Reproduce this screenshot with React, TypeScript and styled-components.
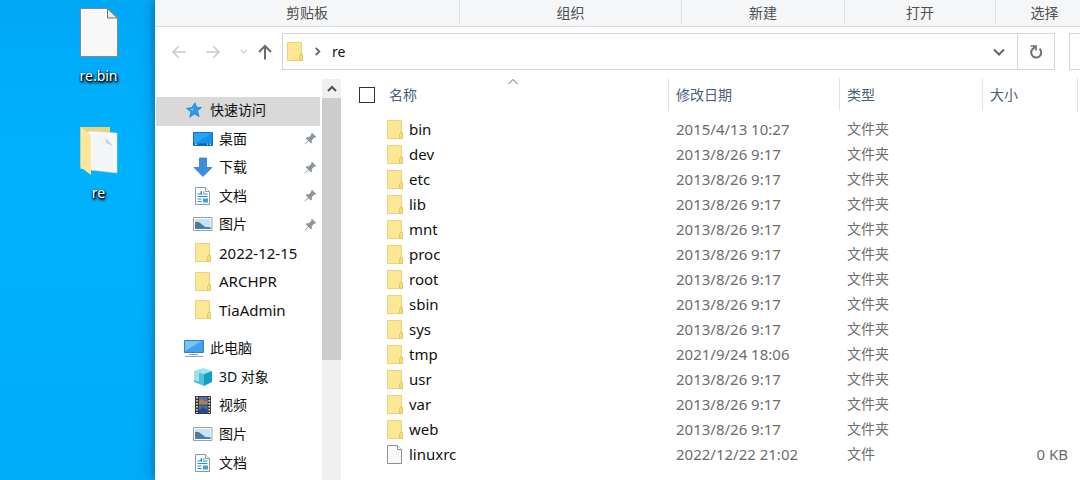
import React from 'react';
import styled, { createGlobalStyle } from 'styled-components';

const GlobalStyle = createGlobalStyle`
  *, *::before, *::after { box-sizing: border-box; }
  body {
    margin: 0;
    background: #00acf8;
    font-family: "Noto Sans", "Noto Sans CJK SC", sans-serif;
    font-size: 15px;
    color: #111;
  }
  :lang(zh) { font-size: 14px; }
  button { font: inherit; color: inherit; border: 0; padding: 0; background: none; }
  ul { list-style: none; margin: 0; padding: 0; }
  svg { display: block; flex: none; }
`;

const Screen = styled.div`
  display: flex;
  min-height: 100vh;
  overflow: hidden;
  background: linear-gradient(180deg, #00a8f6 0%, #00b2fe 35%, #00b0fc 60%, #00abf8 100%);
`;

const Desktop = styled.section`
  flex: none;
  width: 155px;
  padding: 7px 20px 0 62px;
  display: flex;
  flex-direction: column;
  gap: 38px;
`;

const DesktopItem = styled.button`
  display: flex;
  flex-direction: column;
  align-items: center;
  gap: 8px;
  width: 73px;
  font-size: 14px;
  line-height: 20px;
  color: #fff;
  text-shadow: 0 1px 2px #000, 1px 1px 2px #000, 1px 2px 3px #000;
`;

const Window = styled.main`
  flex: 1;
  min-width: 0;
  display: flex;
  flex-direction: column;
  background: #fff;
  box-shadow: 0 0 12px rgba(0, 50, 100, 0.6);
`;

const Ribbon = styled.div`
  display: grid;
  grid-template-columns:
    minmax(0, 305fr) minmax(0, 222fr) minmax(0, 163fr)
    minmax(0, 151fr) minmax(0, 84fr);
  height: 27px;
  overflow: hidden;
  background: #f5f6f7;
  border-bottom: 1px solid #dadbdc;
`;

const RibbonGroup = styled.div`
  min-width: 98px;
  height: 24px;
  line-height: 25px;
  font-size: 14px;
  text-align: center;
  color: #505050;
  border-right: 1px solid #dfe0e1;
`;

const NavBar = styled.div`
  display: flex;
  align-items: center;
  height: 50px;
  padding: 6px 0 7px 15px;
  overflow: hidden;
`;

const NavButton = styled.button<{ $width: number }>`
  flex: none;
  display: flex;
  align-items: center;
  justify-content: center;
  width: ${(p) => p.$width}px;
  height: 36px;
`;

const AddressBox = styled.div`
  flex: 1;
  display: flex;
  align-items: center;
  height: 37px;
  border: 1px solid #d5d5d5;
`;

const Crumbs = styled.div`
  flex: 1;
  display: flex;
  align-items: center;
  gap: 9px;
  padding-left: 4px;
  font-size: 14px;
`;

const Refresh = styled.button`
  display: flex;
  align-items: center;
  justify-content: center;
  align-self: stretch;
  width: 37px;
  border-left: 1px solid #d5d5d5;
`;

const Search = styled.input`
  width: 11px;
  height: 37px;
  margin-left: 14px;
  padding: 0;
  border: 1px solid #d5d5d5;
  border-right: 0;
  border-radius: 0;
  outline: 0;
`;

const Body = styled.div`
  flex: 1;
  display: flex;
  min-height: 0;
`;

const Sidebar = styled.nav`
  flex: none;
  width: 167px;
  padding: 20px 2px 0 1px;
  display: flex;
  flex-direction: column;
  gap: 10px;
`;

const Tree = styled.ul<{ $height: number }>`
  display: grid;
  grid-auto-rows: 1fr;
  height: ${(p) => p.$height}px;
`;

const TreeRow = styled.li<{ $root?: boolean; $selected?: boolean }>`
  display: flex;
  align-items: center;
  padding: 0 3px 2px ${(p) => (p.$root ? 28 : 37)}px;
  background: ${(p) => (p.$selected ? '#d9d9d9' : 'transparent')};
`;

const TreeIcon = styled.span`
  display: flex;
  justify-content: center;
  width: 20px;
  margin-right: 6px;
`;

const TreeLabel = styled.a`
  flex: 1;
  line-height: 20px;
  white-space: nowrap;
  color: inherit;
  text-decoration: none;
`;

const Scrollbar = styled.div`
  flex: none;
  width: 19px;
  margin-top: 2px;
  background: #f0f0f0;
`;

const ScrollButton = styled.button`
  display: flex;
  align-items: center;
  justify-content: center;
  width: 100%;
  height: 19px;
`;

const ScrollThumb = styled.div`
  height: 262px;
  background: #cdcdcd;
`;

const FileArea = styled.div`
  flex: 1;
  min-width: 0;
`;

const FileTable = styled.table`
  width: 100%;
  table-layout: fixed;
  border-collapse: collapse;
`;

const Col = styled.col<{ $width?: number }>`
  width: ${(p) => (p.$width ? `${p.$width}px` : 'auto')};
`;

const HeadCell = styled.th`
  position: relative;
  height: 40px;
  padding: 0 0 6px 7px;
  text-align: left;
  vertical-align: middle;
  font-weight: 400;
  font-size: 14px;
  color: #4c607a;
`;

const HeadInner = styled.div<{ $line?: boolean }>`
  height: 33px;
  line-height: 33px;
  margin-left: -7px;
  padding-left: 7px;
  border-left: 1px solid ${(p) => (p.$line ? '#e2e2e2' : 'transparent')};
`;

const SortMark = styled.span`
  position: absolute;
  top: -1px;
  left: 44%;
`;

const Check = styled.input`
  appearance: none;
  display: block;
  width: 16px;
  height: 16px;
  margin: 1px 0 0 11px;
  border: 1px solid #333;
  background: #fff;
`;

const Cell = styled.td<{ $right?: boolean }>`
  height: 25px;
  padding: 0 ${(p) => (p.$right ? 9 : 0)}px 1px 8px;
  line-height: 22px;
  white-space: nowrap;
  text-align: ${(p) => (p.$right ? 'right' : 'left')};
  color: #6d6d6d;
`;

const FileName = styled.div`
  display: flex;
  align-items: center;
  gap: 6px;
  margin-left: -2px;
  color: #111;
`;

const Folder = () => (
  <svg width="16" height="19" viewBox="0 0 16 19">
    <path d="M.5.5h14v11l1 1.500v5.500H.5z" fill="#fce792" stroke="#ecd27c" />
    <path d="M12.500 18.500v-4l1.500-3 1.500 2v5z" fill="#f8dc76" stroke="#e5c766" />
  </svg>
);

const Sheet = () => (
  <svg width="16" height="19" viewBox="0 0 16 19">
    <path d="M.5.5h10l4 4v14H.5z" fill="#f9f9f9" stroke="#8f8f8f" />
    <path d="M10.500.5v4h4" fill="#fff" stroke="#8f8f8f" />
  </svg>
);

const BigSheet = () => (
  <svg width="38" height="51" viewBox="0 0 38 51">
    <path d="M.5 1.500h27.500l9.500 10v38H.5z" fill="#f8f8f8" stroke="#8d8580" />
    <path d="M27.500 1.500v9.500h10z" fill="#e9e9e9" stroke="#77706c" />
  </svg>
);

const BigFolder = () => (
  <svg width="38" height="51" viewBox="0 0 38 51">
    <path d="M.5 3h29.500v8H10v34H.5z" fill="#eed27c" />
    <path d="M8 7l29 2v40l-26-3z" fill="#fbfbfb" stroke="#d9dde0" strokeWidth=".6" />
    <path d="M12 10l15 1 6 7v28l-21-2z" fill="#f3f5f7" />
    <path d="M26 14l7 8-7-3z" fill="#c9d3dc" />
    <path d="M.5 3L11 11v40L.5 43z" fill="#fde59c" />
  </svg>
);

const Star = () => (
  <svg width="16" height="16" viewBox="0 0 16 16">
    <path d="M9 .8l1.500 4.500 5 .2-4 3.300 1.600 5.700-4.700-2.500-4.700 3.200 1.300-5.400L.6 6.500l5.200-.9z" fill="#2f9be6" stroke="#1b83d2" strokeWidth=".8" />
    <path d="M8.800 3l-.9 3.300-4.300.8 3.200 1.800z" fill="#6bc3fa" />
  </svg>
);

const DesktopIcon = () => (
  <svg width="20" height="16" viewBox="0 0 20 16">
    <path d="M.5 1.500h19v13H.5z" fill="#1590ee" stroke="#0e70c4" />
    <path d="M1 2h18L3 12H1z" fill="#2ba1f7" />
    <path d="M1 12.500h18v1.500H1z" fill="#0b62b0" />
    <path d="M2 13.200h2M14 13.200h1M16.500 13.200h1.500" stroke="#fff" />
  </svg>
);

const Download = () => (
  <svg width="20" height="20" viewBox="0 0 20 20">
    <path d="M6.500 1h7v9.500h5.500L10 19.500 1 10.500h5.500z" fill="#3b8ede" stroke="#2f7dcb" strokeWidth=".8" />
  </svg>
);

const DocumentIcon = () => (
  <svg width="16" height="20" viewBox="0 0 16 20">
    <path d="M.5 1.500h10l4 4v13H.5z" fill="#fbfdff" stroke="#8b99a5" />
    <path d="M10.500 1.500v4h4" fill="#fff" stroke="#8b99a5" />
    <path d="M2.500 8h3l1-3v4M8 6h1.500M2.500 10.500h10M2.500 15.500h4M2.500 13h4M8 8h4.500" stroke="#2a91cf" fill="none" />
    <path d="M8 12.500h5v4H8z" fill="#3fa0dc" />
  </svg>
);

const Picture = () => (
  <svg width="20" height="16" viewBox="0 0 20 16">
    <path d="M.5 1.500h18.500v13H.5z" fill="#fff" stroke="#9a9fa4" />
    <path d="M2 3h15.500v10H2z" fill="#c5e3f6" />
    <path d="M2 6q4-1 7 2.500t8.500 2.500v2H2z" fill="#4f7a8c" />
    <path d="M2 11q7-1 15.500 1v1H2z" fill="#3f82b5" />
  </svg>
);

const Computer = () => (
  <svg width="20" height="19" viewBox="0 0 20 19">
    <path d="M.5 1.500h19v12H.5z" fill="#3ea2ec" stroke="#3b7db4" />
    <path d="M1 2h17L1 12z" fill="#74c4f8" />
    <path d="M5 15.500h9M1 17.500h18" stroke="#8aa0ae" />
  </svg>
);

const Cube = () => (
  <svg width="20" height="20" viewBox="0 0 20 20">
    <path d="M1 4l9-3 9 3-8 3z" fill="#9ce4f0" />
    <path d="M1 4l10 3v12L1 15z" fill="#4cc4dc" />
    <path d="M19 4l-8 3v12l8-4z" fill="#159dbd" />
    <path d="M1 4l5 1.500v9L1 13z" fill="#9fe3ef" />
  </svg>
);

const Film = () => (
  <svg width="18" height="20" viewBox="0 0 18 20">
    <path d="M1 1h16v18H1z" fill="#3a3a3a" />
    <path d="M5 2h8.500v7.500H5z" fill="#5271ad" />
    <path d="M5 10.500h8.500V18H5z" fill="#456fb7" />
    <path d="M5 6l3-2 3 3 2.500-2v4.500H5z" fill="#b58243" />
    <path d="M5 15l4-3 4.500 3v3H5z" fill="#274b86" />
    <path d="M3 2v16M15.300 2v16" stroke="#e8e8e8" strokeWidth="1.600" strokeDasharray="1.500 1.500" />
  </svg>
);

const Pin = () => (
  <svg width="13" height="13" viewBox="0 0 13 13">
    <path d="M8 .8L12.200 5l-1 .8-1-.2-2.400 2.600.1 2.200-1 1L4.500 9 1 12.500l-.5-.5L4 8.500 1.700 6.200l1-1 2.200.1L7.400 2.800 7.200 1.600z" fill="#8c959c" />
  </svg>
);

const Arrow = ({ dir, color }: { dir: 'left' | 'right' | 'up'; color: string }) => (
  <svg width="16" height="16" viewBox="0 0 16 16" fill="none" stroke={color} strokeWidth={dir === 'up' ? 2 : 1.5}>
    {dir === 'left' && <path d="M15 8H2M7.500 2.500L2 8l5.500 5.500" />}
    {dir === 'right' && <path d="M1 8h13M8.500 2.500L14 8l-5.500 5.500" />}
    {dir === 'up' && <path d="M8 15.500V2M2 8l6-6 6 6" />}
  </svg>
);

const Chevron = ({ d, color, w = 1.5, size = 12 }: { d: string; color: string; w?: number; size?: number }) => (
  <svg width={size} height={size} viewBox="0 0 12 12" fill="none" stroke={color} strokeWidth={w}>
    <path d={d} />
  </svg>
);

const RefreshIcon = () => (
  <svg width="14" height="15" viewBox="0 0 14 15" fill="none" stroke="#707070" strokeWidth="2">
    <path d="M10.500 4.800A5 5 0 1 1 3.500 5.200L6 2.800" />
    <path d="M1.500 2H7v4.500" strokeWidth="1.700" />
  </svg>
);

const quickAccess = [
  { label: '桌面', icon: <DesktopIcon />, pinned: true },
  { label: '下载', icon: <Download />, pinned: true },
  { label: '文档', icon: <DocumentIcon />, pinned: true },
  { label: '图片', icon: <Picture />, pinned: true },
  { label: '2022-12-15', icon: <Folder />, latin: true },
  { label: 'ARCHPR', icon: <Folder />, latin: true },
  { label: 'TiaAdmin', icon: <Folder />, latin: true },
];

const computer = [
  { label: '3D 对象', icon: <Cube /> },
  { label: '视频', icon: <Film /> },
  { label: '图片', icon: <Picture /> },
  { label: '文档', icon: <DocumentIcon /> },
];

const folders = ['bin', 'dev', 'etc', 'lib', 'mnt', 'proc', 'root', 'sbin', 'sys', 'tmp', 'usr', 'var', 'web'];
const dates: Record<string, string> = { bin: '2015/4/13 10:27', tmp: '2021/9/24 18:06' };

const files = [
  ...folders.map((name) => ({ name, date: dates[name] ?? '2013/8/26 9:17', type: '文件夹', size: '' })),
  { name: 'linuxrc', date: '2022/12/22 21:02', type: '文件', size: '0 KB' },
];

export default function App() {
  return (
    <Screen>
      <GlobalStyle />
      <Desktop>
        <DesktopItem><BigSheet />re.bin</DesktopItem>
        <DesktopItem><BigFolder />re</DesktopItem>
      </Desktop>
      <Window>
        <Ribbon>
          {['剪贴板', '组织', '新建', '打开', '选择'].map((name) => (
            <RibbonGroup key={name}>{name}</RibbonGroup>
          ))}
        </Ribbon>
        <NavBar>
          <NavButton $width={18} aria-label="后退"><Arrow dir="left" color="#c9c9c9" /></NavButton>
          <NavButton $width={50} aria-label="前进"><Arrow dir="right" color="#c9c9c9" /></NavButton>
          <NavButton $width={10} aria-label="最近位置"><Chevron d="M2 4l4 4 4-4" color="#cfcfcf" size={9} /></NavButton>
          <NavButton $width={34} aria-label="上移"><Arrow dir="up" color="#6b6b6b" /></NavButton>
          <AddressBox>
            <Crumbs>
              <Folder />
              <Chevron d="M4 2l4 4-4 4" color="#666" w={2} size={11} />
              <span>re</span>
            </Crumbs>
            <NavButton $width={36} aria-label="展开地址"><Chevron d="M1 3.500l5 5 5-5" color="#666" w={2} /></NavButton>
            <Refresh aria-label="刷新"><RefreshIcon /></Refresh>
          </AddressBox>
          <Search type="search" aria-label="搜索" />
        </NavBar>
        <Body>
          <Sidebar>
            <Tree $height={228}>
              <TreeRow $root $selected>
                <TreeIcon><Star /></TreeIcon>
                <TreeLabel href="#quick" lang="zh">快速访问</TreeLabel>
              </TreeRow>
              {quickAccess.map((item) => (
                <TreeRow key={item.label}>
                  <TreeIcon>{item.icon}</TreeIcon>
                  <TreeLabel href="#folder" lang={item.latin ? 'en' : 'zh'}>{item.label}</TreeLabel>
                  {item.pinned && <Pin />}
                </TreeRow>
              ))}
            </Tree>
            <Tree $height={143}>
              <TreeRow $root>
                <TreeIcon><Computer /></TreeIcon>
                <TreeLabel href="#computer" lang="zh">此电脑</TreeLabel>
              </TreeRow>
              {computer.map((item) => (
                <TreeRow key={item.label}>
                  <TreeIcon>{item.icon}</TreeIcon>
                  <TreeLabel href="#folder" lang="zh">{item.label}</TreeLabel>
                </TreeRow>
              ))}
            </Tree>
          </Sidebar>
          <Scrollbar>
            <ScrollButton aria-label="向上滚动"><Chevron d="M2 8l4-4 4 4" color="#505050" w={2} /></ScrollButton>
            <ScrollThumb />
          </Scrollbar>
          <FileArea>
            <FileTable>
              <colgroup>
                <Col $width={40} />
                <Col />
                <Col $width={171} />
                <Col $width={143} />
                <Col $width={95} />
                <Col $width={3} />
              </colgroup>
              <thead>
                <tr>
                  <HeadCell><Check type="checkbox" aria-label="全选" /></HeadCell>
                  <HeadCell>
                    <HeadInner>名称</HeadInner>
                    <SortMark><Chevron d="M1.500 8L6 3.500 10.500 8" color="#666" w={1} /></SortMark>
                  </HeadCell>
                  <HeadCell><HeadInner $line>修改日期</HeadInner></HeadCell>
                  <HeadCell><HeadInner $line>类型</HeadInner></HeadCell>
                  <HeadCell><HeadInner $line>大小</HeadInner></HeadCell>
                  <HeadCell><HeadInner $line /></HeadCell>
                </tr>
              </thead>
              <tbody>
                {files.map((file) => (
                  <tr key={file.name}>
                    <Cell />
                    <Cell>
                      <FileName>{file.size ? <Sheet /> : <Folder />}{file.name}</FileName>
                    </Cell>
                    <Cell>{file.date}</Cell>
                    <Cell lang="zh">{file.type}</Cell>
                    <Cell $right>{file.size}</Cell>
                    <Cell />
                  </tr>
                ))}
              </tbody>
            </FileTable>
          </FileArea>
        </Body>
      </Window>
    </Screen>
  );
}
